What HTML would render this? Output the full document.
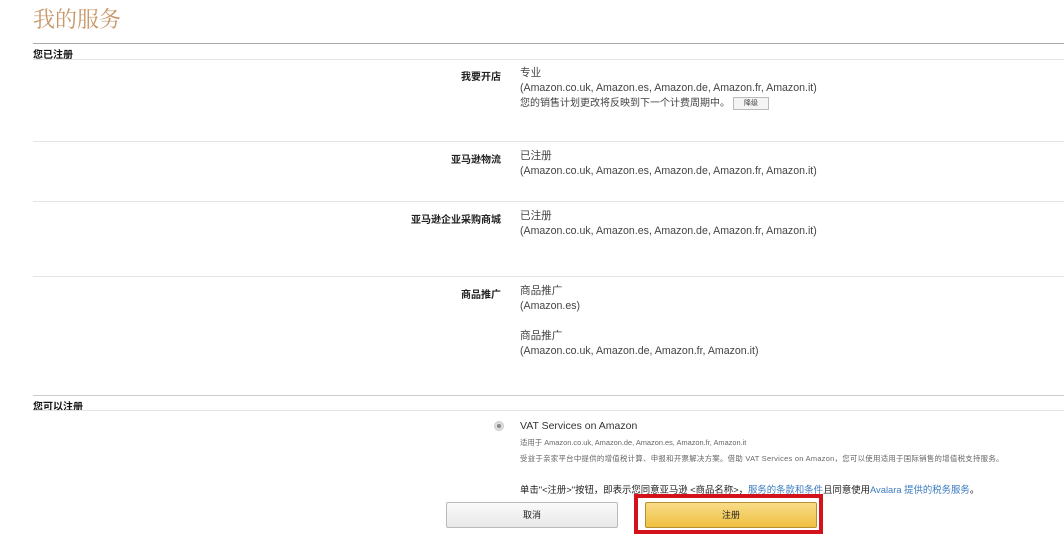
<!DOCTYPE html>
<html><head><meta charset="utf-8"><style>
body{margin:0;width:1064px;height:552px;background:#fff;position:relative;overflow:hidden;font-family:"Liberation Sans","Noto Sans CJK SC",sans-serif;color:#333;font-size:10px}
.a{position:absolute;white-space:nowrap}
.l{position:absolute;right:563px;font-weight:bold;color:#222;font-size:10px}
.h{position:absolute;left:33px;height:1px;background:#e4e4e4;right:0}
.v{position:absolute;left:520px;line-height:15px;font-size:10.6px;color:#444}
</style></head><body>
<div class="a" style="left:33px;top:3px;font-size:22px;color:#c8986a;font-family:'Liberation Serif','Noto Serif CJK SC',serif">我的服务</div>
<div class="h" style="top:43px;background:#aaa"></div>
<div class="a" style="left:33px;top:46px;font-weight:bold;color:#111">您已注册</div>
<div class="h" style="top:59px"></div>
<div class="l" style="top:68px">我要开店</div>
<div class="v" style="top:66px">专业<br>(Amazon.co.uk, Amazon.es, Amazon.de, Amazon.fr, Amazon.it)<br><span style="font-size:10px">您的销售计划更改将反映到下一个计费周期中。</span> <span style="display:inline-block;width:34px;height:11px;border:1px solid #bbb;background:#f4f4f4;font-size:7px;text-align:center;line-height:11px;vertical-align:middle">降级</span></div>
<div class="h" style="top:141px"></div>
<div class="l" style="top:151px">亚马逊物流</div>
<div class="v" style="top:149px">已注册<br>(Amazon.co.uk, Amazon.es, Amazon.de, Amazon.fr, Amazon.it)</div>
<div class="h" style="top:201px"></div>
<div class="l" style="top:211px">亚马逊企业采购商城</div>
<div class="v" style="top:209px">已注册<br>(Amazon.co.uk, Amazon.es, Amazon.de, Amazon.fr, Amazon.it)</div>
<div class="h" style="top:276px"></div>
<div class="l" style="top:286px">商品推广</div>
<div class="v" style="top:284px">商品推广<br>(Amazon.es)<br><br>商品推广<br>(Amazon.co.uk, Amazon.de, Amazon.fr, Amazon.it)</div>
<div class="h" style="top:395px;background:#ccc"></div>
<div class="a" style="left:33px;top:398px;font-weight:bold;color:#111">您可以注册</div>
<div class="h" style="top:410px"></div>
<div class="a" style="left:494px;top:421px;width:8px;height:8px;border-radius:50%;background:#ddd;border:1px solid #ccc"><div style="position:absolute;left:2px;top:2px;width:4px;height:4px;border-radius:50%;background:#888"></div></div>
<div class="a" style="left:520px;top:420px;font-size:10.5px;color:#333">VAT Services on Amazon</div>
<div class="a" style="left:520px;top:437px;font-size:7.4px;color:#666">适用于 Amazon.co.uk, Amazon.de, Amazon.es, Amazon.fr, Amazon.it</div>
<div class="a" style="left:520px;top:453px;font-size:7.4px;color:#666;letter-spacing:0.3px">受益于亲家平台中提供的增值税计算、申报和开票解决方案。借助 VAT Services on Amazon，您可以使用适用于国际销售的增值税支持服务。</div>
<div class="a" style="left:520px;top:482px;font-size:9.4px;color:#222">单击"<注册>"按钮，即表示您同意亚马逊 <商品名称>，<span style="color:#3b7bc0">服务的条款和条件</span>且同意使用<span style="color:#3b7bc0">Avalara 提供的税务服务</span>。</div>
<div class="a" style="left:446px;top:502px;width:170px;height:24px;border:1px solid #bbb;border-radius:2px;background:linear-gradient(#fafafa,#e8e8e8);text-align:center;line-height:24px;font-size:9px;color:#222">取消</div>
<div class="a" style="left:634px;top:494px;width:189px;height:40px;box-sizing:border-box;border:4px solid #d4121c"></div>
<div class="a" style="left:645px;top:502px;width:170px;height:24px;border:1px solid #b89030;border-radius:2px;background:linear-gradient(#f8dc88,#f0c040);text-align:center;line-height:24px;font-size:9px;color:#222">注册</div>
</body></html>
